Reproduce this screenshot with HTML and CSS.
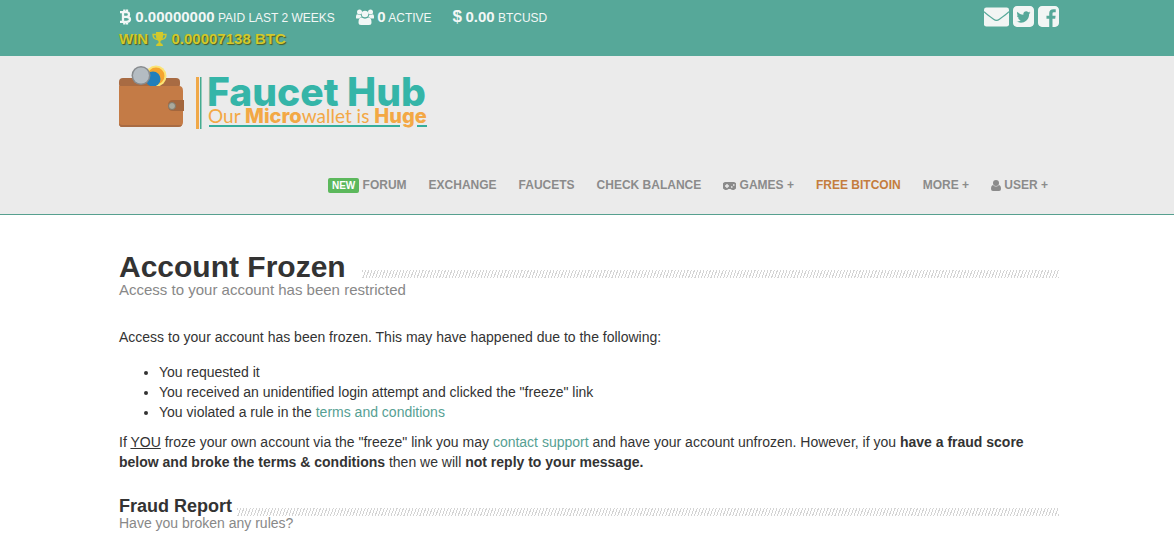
FILE: index.html
```html
<!DOCTYPE html>
<html lang="en">
<head>
<meta charset="utf-8">
<title>Account Frozen - Faucet Hub</title>
<link rel="stylesheet" href="styles.css">
</head>
<body>
<div class="topbar">
  <div class="container topbar-row">
    <div>
      <ul class="stats">
        <li><svg class="icon-btc" viewBox="0 0 13 16" aria-hidden="true"><path d="M1 3.200H7.500Q10 3.200 10 5.400Q10 7.600 7.500 7.800H4M7.500 7.800Q11 8 11 10.300Q11 12.800 7.500 12.800H1M4 3V13M5.300 .5V3M8 .5V3M5.300 13V15.500M8 13V15.500" fill="none" stroke="currentColor" stroke-width="2.300"/></svg> <strong>0.00000000</strong> PAID LAST 2 WEEKS</li>
        <li><svg class="icon-users" viewBox="0 0 18 16" aria-hidden="true" fill="currentColor"><circle cx="3.500" cy="3" r="2.500"/><circle cx="14.500" cy="3" r="2.500"/><path d="M0 9V7.500Q0 5.300 1.500 5.300Q3 6.300 4.700 5.800Q5 7.300 5.600 8Q4 8.300 3.200 9.500H1Q0 9.500 0 9ZM18 9V7.500Q18 5.300 16.500 5.300Q15 6.300 13.300 5.800Q13 7.300 12.400 8Q14 8.300 14.800 9.500H17Q18 9.500 18 9Z"/><circle cx="9" cy="5" r="3.300"/><path d="M2.500 13.500Q2.500 8.600 5.500 8.600Q9 10.800 12.500 8.600Q15.500 8.600 15.500 13.500Q15.500 16 13 16H5Q2.500 16 2.500 13.500Z"/></svg> <strong>0</strong> ACTIVE</li>
        <li><strong class="dollar">$</strong> <strong>0.00</strong> BTCUSD</li>
      </ul>
      <p class="win">WIN <svg class="icon-trophy" viewBox="0 0 15 14" aria-hidden="true"><path d="M4 2.500H1Q1 7 5.500 7.500M11 2.500H14Q14 7 9.500 7.500" fill="none" stroke="currentColor" stroke-width="1.300"/><path d="M4 0H11V4Q11 8 8.500 9V11Q11 11.300 11 14H4Q4 11.300 6.500 11V9Q4 8 4 4Z" fill="currentColor"/></svg> 0.00007138 BTC</p>
    </div>
    <div class="social">
      <a href="#" aria-label="Email"><svg class="icon-mail" viewBox="0 0 26 20"><rect width="26" height="20" rx="2.500" fill="currentColor"/><path d="M0 4.500Q3 7.500 10 12.300Q13 14.500 16 12.300Q23 7.500 26 4.500" fill="none" stroke="#56a899" stroke-width="1.300"/></svg></a>
      <a href="#" aria-label="Twitter"><svg class="icon-square" viewBox="128 128 1536 1536"><path fill="currentColor" d="M1408 610q-56 25-121 34 68-40 93-117-65 38-134 51-61-66-153-66-87 0-148.500 61.500t-61.500 148.500q0 29 5 48-129-7-242-65t-192-155q-29 50-29 106 0 114 91 175-47-1-100-26v2q0 75 50 133.500t123 72.500q-29 8-51 8-13 0-39-4 21 63 74.500 104t121.500 42q-116 90-261 90-26 0-50-3 148 94 322 94 112 0 210-35.500t168-95 120.500-137 75-162 24.500-168.500q0-18-1-27 63-45 105-109zm256-194v960q0 119-84.500 203.500t-203.500 84.500h-960q-119 0-203.500-84.500t-84.500-203.500v-960q0-119 84.500-203.500t203.500-84.500h960q119 0 203.500 84.500t84.500 203.500z"/></svg></a>
      <a href="#" aria-label="Facebook"><svg class="icon-square" viewBox="128 128 1536 1536"><path fill="currentColor" d="M1376 128q119 0 203.500 84.500t84.500 203.500v960q0 119-84.500 203.500t-203.500 84.500h-188v-595h199l30-232h-229v-148q0-56 23.500-84t91.500-28l122-1v-207q-63-9-178-9-136 0-217.500 80t-81.500 226v171h-200v232h200v595h-532q-119 0-203.500-84.500t-84.500-203.500v-960q0-119 84.500-203.500t203.500-84.500h960z"/></svg></a>
    </div>
  </div>
</div>

<header class="header">
  <div class="container">
    <a class="logo" href="#" aria-label="Faucet Hub">
      <svg class="logo-art" viewBox="0 0 310 66">
        <rect x="0" y="13" width="61" height="10" rx="4" fill="#a86b43"/>
        <circle cx="37" cy="11" r="10.500" fill="#fbe475"/><circle cx="37" cy="11" r="8.500" fill="#f5a52f"/>
        <circle cx="34" cy="14" r="7.500" fill="#237fba"/>
        <circle cx="22" cy="10.500" r="9.500" fill="#878b8e"/><circle cx="22" cy="10.500" r="8" fill="#b4bcc2"/>
        <path d="M0 21H60Q64 21 64 26V57Q64 62 59 62H3Q0 62 0 58Z" fill="#c47b46"/>
        <path d="M0 58Q0 62 3 62H59Q62 62 63 60H3Q1 60 0 58Z" fill="#a86b43"/>
        <path d="M54 35H65V46H54Q49 46 49 40.500Q49 35 54 35Z" fill="#a3663d"/>
        <circle cx="53" cy="41" r="3.500" fill="#a9a99d" stroke="#80796b"/>
        <rect x="77" y="12" width="3" height="52" fill="#f0a848"/>
        <rect x="81" y="12" width="1.500" height="52" fill="#45ab90"/>
        <text class="logo-name" x="88" y="41">Faucet Hub</text>
        <text class="logo-tag" x="89" y="58">Our <tspan class="logo-strong">Micro</tspan>wallet is <tspan class="logo-strong">Huge</tspan></text>
        <path d="M90 61H281M298 61H308" stroke="#35ad9c" stroke-width="2"/>
      </svg>
    </a>
    <nav class="nav">
      <a href="#"><span class="badge">NEW</span> FORUM</a>
      <a href="#">EXCHANGE</a>
      <a href="#">FAUCETS</a>
      <a href="#">CHECK BALANCE</a>
      <a href="#"><svg class="icon-pad" viewBox="0 0 13 8" aria-hidden="true"><path fill="currentColor" fill-rule="evenodd" d="M4 0H9A4 4 0 1 1 7.500 7H5.500A4 4 0 1 1 4 0ZM3.300 2V3.300H2V4.700H3.300V6H4.700V4.700H6V3.300H4.700V2ZM8 4.200H9.500V5.700H8ZM10 2.200H11.500V3.700H10Z"/></svg> GAMES +</a>
      <a class="accent" href="#">FREE BITCOIN</a>
      <a href="#">MORE +</a>
      <a href="#"><svg class="icon-user" viewBox="0 0 10 11" aria-hidden="true" fill="currentColor"><circle cx="5" cy="3" r="3"/><path d="M2 5Q5 8 8 5Q10 5.500 10 9Q10 11 8 11H2Q0 11 0 9Q0 5.500 2 5Z"/></svg> USER +</a>
    </nav>
  </div>
</header>

<main class="container content">
  <div class="heading"><h1>Account Frozen</h1><span class="hatch"></span></div>
  <p class="lead">Access to your account has been restricted</p>
  <p>Access to your account has been frozen. This may have happened due to the following:</p>
  <ul class="reasons">
    <li>You requested it</li>
    <li>You received an unidentified login attempt and clicked the "freeze" link</li>
    <li>You violated a rule in the <a href="#">terms and conditions</a></li>
  </ul>
  <p>If <u>YOU</u> froze your own account via the "freeze" link you may <a href="#">contact support</a> and have your account unfrozen. However, if you <strong>have a fraud score below and broke the terms &amp; conditions</strong> then we will <strong>not reply to your message.</strong></p>
  <div class="heading sub"><h2>Fraud Report</h2><span class="hatch"></span></div>
  <p class="sublead">Have you broken any rules?</p>
</main>
</body>
</html>
```
FILE: styles.css
```css
* { box-sizing: border-box; }
body {
  margin: 0;
  font: 14px/20px "Liberation Sans", Arial, sans-serif;
  color: #333;
  background: #fff;
}
a { color: #56a093; text-decoration: none; }
p, h1, h2, ul { margin: 0; padding: 0; }
.container { max-width: 944px; margin: 0 auto; padding-left: 4px; }

.topbar { background: #56a899; color: #f2f7f6; padding: 6px 0 7px; }
.topbar-row { display: flex; justify-content: space-between; align-items: flex-start; }
.stats { display: flex; gap: 21px; list-style: none; font-size: 12px; line-height: 22px; }
.stats strong { font-size: 15px; }
.stats .dollar { font-size: 17px; }
.icon-btc { width: 13px; height: 16px; vertical-align: -3px; }
.icon-users { width: 18px; height: 16px; vertical-align: -3px; }
.win { font-size: 15px; font-weight: bold; line-height: 20px; color: #d2c92b; text-shadow: 1px 1px 1px #4d5a20; }
.icon-trophy { width: 15px; height: 14px; vertical-align: -2px; }
.social { display: flex; gap: 4px; }
.social a { color: #f2f5f4; }
.social svg { display: block; }
.icon-mail { width: 25px; height: 20px; margin-top: 1px; }
.icon-square { width: 21px; height: 21px; }

.header { background: #ebebeb; border-bottom: 1px solid #56a08f; padding: 9px 0 17px; }
.logo { display: block; }
.logo-art { display: block; width: 310px; height: 66px; }
.logo-name { font: 800 39px Inter, sans-serif; fill: #35b5a8; }
.logo-tag { font: 19px Lato, sans-serif; fill: #f3a845; }
.logo-strong { font: 800 20px Inter, sans-serif; }
.nav {
  display: flex;
  justify-content: flex-end;
  gap: 22px;
  margin-top: 42px;
  padding-right: 11px;
  font-size: 12px;
  font-weight: bold;
  line-height: 24px;
}
.nav a { color: #8b8b8b; white-space: nowrap; }
.nav .accent { color: #c47d3e; }
.badge { display: inline-block; padding: 0 4px; border-radius: 2px; background: #5cb85c; color: #fff; font-size: 10px; line-height: 15px; }
.icon-pad { width: 13px; height: 8px; vertical-align: -1px; }
.icon-user { width: 10px; height: 11px; vertical-align: -2px; }

.content { padding-top: 32px; }
.heading { display: flex; align-items: flex-end; gap: 16px; }
.heading h1 { font-size: 30px; line-height: 40px; color: #333; }
.heading h2 { font-size: 18px; line-height: 20px; color: #333; }
.hatch {
  flex: 1;
  height: 8px;
  margin-bottom: 9px;
  background: repeating-linear-gradient(110deg, #d4d4d4 0 1px, #fff 1px 3px);
}
.sub { gap: 5px; margin-top: 24px; }
.sub .hatch { margin-bottom: 0; }
.lead { margin-top: -7px; margin-bottom: 27px; font-size: 15px; color: #888; }
.reasons { margin: 15px 0 10px; padding-left: 40px; }
.sublead { line-height: 15px; color: #888; }
```
